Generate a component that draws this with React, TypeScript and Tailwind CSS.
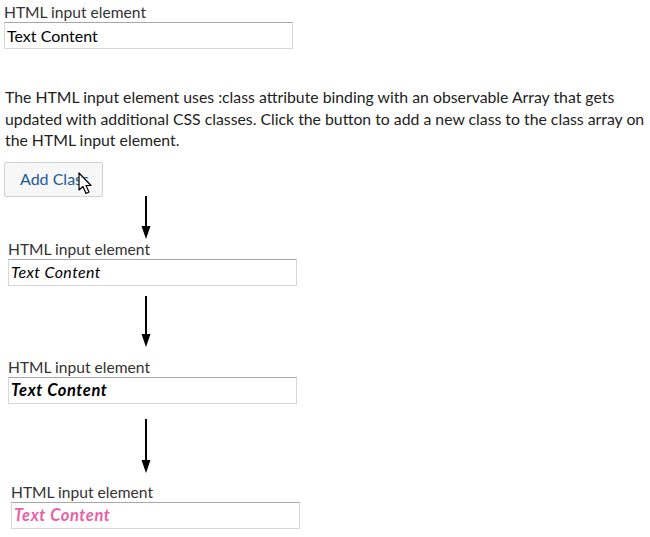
import React from "react";

const font = { fontFamily: "Lato, 'Open Sans', sans-serif" };

function Arrow({ h }: { h: number }) {
  return (
    <svg width="12" height={h} viewBox={`0 0 12 ${h}`} className="block">
      <line x1="6" y1="0" x2="6" y2={h - 10} stroke="#000" strokeWidth="2" />
      <polygon points={`1.5,${h - 13} 10.5,${h - 13} 6,${h}`} fill="#000" />
    </svg>
  );
}

function Field({ inputClass, ml }: { inputClass: string; ml: string }) {
  return (
    <div className={`flex flex-col ${ml}`}>
      <div className="text-[15.6px] leading-[19px] text-[#333]">HTML input element</div>
      <div className={`w-[289px] h-[27px] border border-[#d6d6d6] border-t-[#a8a8a8] flex items-center px-[2px] ${inputClass}`}>
        Text Content
      </div>
    </div>
  );
}

export default function App() {
  return (
    <div className="w-[650px] h-[537px] bg-white text-[#222]" style={font}>
      <div className="pt-[3px]">
        <Field inputClass="text-[16px] text-black" ml="ml-[4px]" />
      </div>
      <p className="mt-[37px] ml-[5px] text-[15.8px] leading-[21.5px] text-[#222] whitespace-nowrap">
        The HTML input element uses :class attribute binding with an observable Array that gets
        <br />
        updated with additional CSS classes. Click the button to add a new class to the class array on
        <br />
        the HTML input element.
      </p>
      <div className="relative mt-[11px] ml-[4px] w-[99px]">
        <button className="w-[99px] h-[35px] bg-[#f7f7f7] border border-[#d0d0d0] rounded-[2px] text-[16px] text-[#1c5a96] text-left pl-[15px]" style={font}>
          Add Class
        </button>
        <svg className="absolute left-[74px] top-[10px]" width="16" height="24" viewBox="0 0 16 24">
          <path d="M1 1 L1 18 L5 14.5 L8 21.5 L11 20 L8 13.5 L13 13.5 Z" fill="#fff" stroke="#000" strokeWidth="1.2" strokeLinejoin="round" />
        </svg>
      </div>
      <div className="ml-[140px] -mt-[1px]">
        <Arrow h={43} />
      </div>
      <div className="mt-[1px]">
        <Field inputClass="text-[16px] tracking-[0.4px] italic text-black" ml="ml-[8px]" />
      </div>
      <div className="ml-[140px] mt-[10px]">
        <Arrow h={51} />
      </div>
      <div className="mt-[11px]">
        <Field inputClass="text-[16.5px] tracking-[0.6px] italic font-bold text-black" ml="ml-[8px]" />
      </div>
      <div className="ml-[140px] mt-[15px]">
        <Arrow h={54} />
      </div>
      <div className="mt-[10px]">
        <Field inputClass="text-[16.5px] tracking-[0.6px] italic font-bold text-[#ec5fa6]" ml="ml-[11px]" />
      </div>
    </div>
  );
}
